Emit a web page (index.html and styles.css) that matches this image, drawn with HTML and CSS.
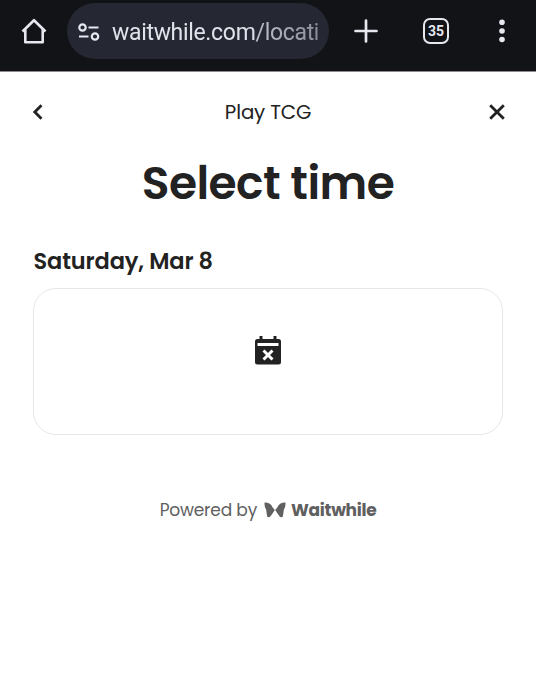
FILE: index.html
```html
<!DOCTYPE html>
<html lang="en">
<head>
<meta charset="utf-8">
<title>Select time</title>
<link rel="stylesheet" href="styles.css">
</head>
<body>
<header class="browser">
  <svg class="home" width="28" height="28" viewBox="0 0 28 28"><path d="M2.500 14.500 14 3.200l11.500 11.300M5.300 12v13.200h17.400V12" /></svg>
  <div class="address">
    <svg class="tune" width="22" height="18" viewBox="0 0 22 18"><circle cx="4.500" cy="4.500" r="3.200"/><path d="M10.500 4.500H20.500M1 13.500H10.500"/><circle cx="17" cy="13.500" r="3.200"/></svg>
    <div class="url"><span>waitwhile.com</span><span class="path">/locatio</span></div>
  </div>
  <svg class="plus" width="24" height="24" viewBox="0 0 24 24"><path d="M12 1.500v21M1.500 12h21"/></svg>
  <div class="tabs">35</div>
  <svg class="more" width="6" height="24" viewBox="0 0 6 24"><circle cx="3" cy="3.300" r="2.800"/><circle cx="3" cy="12" r="2.800"/><circle cx="3" cy="20.500" r="2.800"/></svg>
</header>
<main>
  <nav class="bar">
    <svg width="12" height="18" viewBox="0 0 12 18"><path d="M9.500 2.300 2.800 9l6.700 6.700"/></svg>
    <div class="title">Play TCG</div>
    <svg width="18" height="18" viewBox="0 0 18 18"><path d="m2.200 2.200 13.600 13.600m0-13.600-13.600 13.600"/></svg>
  </nav>
  <h1>Select time</h1>
  <h2>Saturday, Mar 8</h2>
  <section class="card">
    <svg width="26" height="30" viewBox="0 0 26 30">
      <path fill="#222" d="M4.500 0h3v3h11V0h3v3h2Q26 3 26 5.500V26q0 2.500-2.500 2.500h-21Q0 28.500 0 26V5.500Q0 3 2.500 3h2z"/>
      <path fill="#fff" d="M2.500 7h21v3h-21z"/>
      <path class="cross" d="m8.500 14.500 9 9m0-9-9 9"/>
    </svg>
  </section>
  <footer>
    <span class="powered">Powered by</span>
    <svg width="22" height="16" viewBox="0 0 22 16"><path d="M.6.500C4.500.4 7.500 2 8.500 5.200L10.800 8 8 12.200Q6.200 15.300 4.300 15.300 3 15.200 2.800 12.500L2.200 7.800Q0 4.200.6.500ZM21.400.500C17.500.4 14.500 2 13.500 5.200L11.200 8 14 12.200Q15.800 15.300 17.700 15.300 19 15.200 19.200 12.500L19.800 7.800Q22 4.200 21.400.5Z"/></svg>
    <span class="brand">Waitwhile</span>
  </footer>
</main>
</body>
</html>
```
FILE: styles.css
```css
* { box-sizing: border-box; }
body {
  margin: 0;
  background: #fff;
  color: #222;
  font-family: Poppins, Inter, sans-serif;
}
svg { display: block; flex: none; }
.browser {
  height: 72px;
  padding: 3px 0 0 20px;
  display: flex;
  align-items: flex-start;
  background: #121317;
  border-bottom: 1px solid #8d898d;
}
.browser svg { fill: none; stroke: #e6e8f0; stroke-width: 2.6; }
.browser .home { margin-top: 14px; stroke-linejoin: round; }
.address {
  width: 262px;
  height: 56px;
  margin-left: 19px;
  padding: 0 10px 0 11px;
  display: flex;
  align-items: center;
  border-radius: 28px;
  background: #252832;
}
.browser .tune { margin-top: 1px; stroke-width: 2.2; }
.url {
  flex: 1;
  margin: 3px 0 0 12px;
  overflow: hidden;
  white-space: nowrap;
  font: 23px/36px Roboto, sans-serif;
  letter-spacing: -.32px;
  color: #e1e3eb;
  -webkit-mask-image: linear-gradient(90deg, #000 65%, rgba(0, 0, 0, .65) 99%, transparent);
  mask-image: linear-gradient(90deg, #000 65%, rgba(0, 0, 0, .65) 99%, transparent);
}
.path { color: #c5c8d1; }
.browser .plus { margin: 16px 0 0 25px; stroke-linecap: round; stroke-width: 2.7; }
.tabs {
  width: 26px;
  height: 26px;
  margin: 15px 0 0 45px;
  border: 2.5px solid #e6e8f0;
  border-radius: 7px;
  color: #e6e8f0;
  text-align: center;
  font: bold 14px/22px Roboto, sans-serif;
}
.browser .more { margin: 16px 0 0 50px; fill: #e6e8f0; stroke: none; }
main { padding: 0 33px; }
.bar {
  height: 30px;
  margin: 25px -3px 0 -1px;
  display: flex;
  align-items: center;
  justify-content: space-between;
}
.bar svg { fill: none; stroke: #222; stroke-width: 2.8; }
.title { padding-left: 4px; font-size: 19.8px; letter-spacing: -.15px; }
h1 {
  margin: 24px 0 0;
  text-align: center;
  font-size: 45.5px;
  line-height: 64px;
  font-weight: 600;
  letter-spacing: -.55px;
}
h2 {
  margin: 30px 0 0 .5px;
  font-size: 22.5px;
  line-height: 32px;
  font-weight: 600;
  letter-spacing: -.12px;
}
.card {
  width: 470px;
  height: 147px;
  margin-top: 11px;
  padding-top: 47px;
  display: flex;
  justify-content: center;
  border: 1px solid #e7e7e7;
  border-radius: 23px;
}
.cross { stroke: #fff; stroke-width: 3; }
footer {
  height: 30px;
  margin-top: 60px;
  display: flex;
  align-items: center;
  justify-content: center;
  color: #606060;
  font-size: 17px;
  letter-spacing: -.18px;
  white-space: nowrap;
}
footer svg { margin: 0 5px 0 7px; fill: #606060; }
.brand { font-weight: 700; letter-spacing: -.3px; }
```
